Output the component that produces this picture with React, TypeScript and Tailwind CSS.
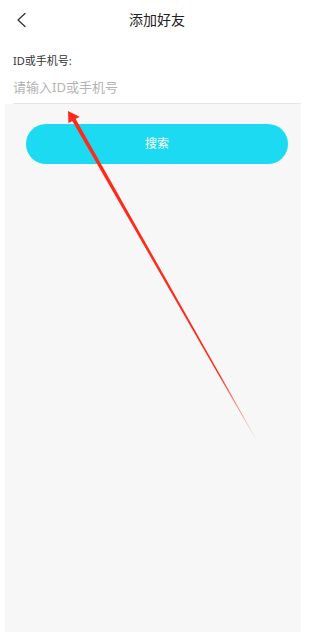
import React from "react";

export default function App() {
  const font = { fontFamily: '"Noto Sans", "Noto Sans CJK SC", sans-serif' };
  return (
    <div className="relative w-[301px] h-[632px] bg-white overflow-hidden flex flex-col" style={font}>
      <div className="h-10 flex items-center shrink-0">
        <div className="w-[40px] pl-[16px] flex items-center">
          <svg width="11" height="16" viewBox="0 0 11 16" fill="none">
            <path d="M9 1.5 L2 8 L9 14.5" stroke="#333" strokeWidth="1.3" strokeLinecap="round" strokeLinejoin="round" />
          </svg>
        </div>
        <div className="flex-1 text-center text-[14px] text-[#222] leading-5">添加好友</div>
        <div className="w-[27px]" />
      </div>
      <div className="pl-[13px] pt-[13px] shrink-0">
        <div className="text-[11px] leading-4 text-[#333]">ID或手机号:</div>
        <div className="h-[35px] border-b border-[#e6e6e6] flex items-center pt-[3px]">
          <input
            className="w-full outline-none bg-transparent text-[13px] placeholder:text-[#b3b3b3] text-[#333]"
            placeholder="请输入ID或手机号"
            style={font}
          />
        </div>
      </div>
      <div className="ml-[5px] flex-1 bg-[#f7f7f7] pt-[20px]">
        <div className="ml-[21px] mr-[13px] h-[40px] rounded-full bg-[#1bdaf1] flex items-center justify-center text-white text-[12px]">
          搜索
        </div>
      </div>
      <svg className="absolute inset-0 pointer-events-none" width="301" height="632" viewBox="0 0 301 632">
        <defs>
          <linearGradient id="fade" gradientUnits="userSpaceOnUse" x1="68" y1="111" x2="257" y2="441">
            <stop offset="0" stopColor="#ff2a1a" stopOpacity="1" />
            <stop offset="0.8" stopColor="#ff2a1a" stopOpacity="1" />
            <stop offset="1" stopColor="#ff2a1a" stopOpacity="0" />
          </linearGradient>
        </defs>
        <polygon
          points="68,111 79.6,116.8 75.7,119 257.3,440.85 256.7,441.15 72.3,121 68.4,123.2"
          fill="url(#fade)"
        />
      </svg>
    </div>
  );
}
